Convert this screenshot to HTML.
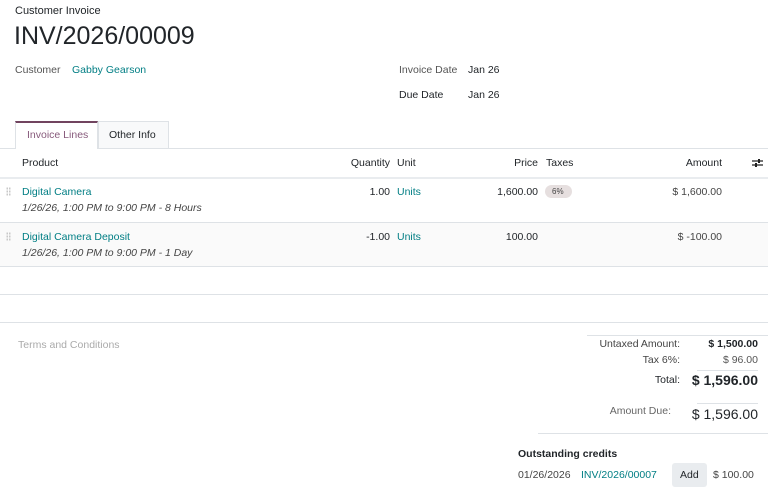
<!DOCTYPE html>
<html><head><style>
*{margin:0;padding:0;box-sizing:border-box}
body{width:768px;height:490px;background:#fff;font-family:"Liberation Sans",sans-serif;font-size:10.5px;color:#212529;position:relative;overflow:hidden}
.a{position:absolute;white-space:nowrap;line-height:1}
.r{text-align:right}
.l{color:#017e84}
.g{color:#555}
.hl{position:absolute;height:1px;background:#dee2e6}
.dots{position:absolute;width:5px;height:9px;background-image:radial-gradient(#c8c8c8 45%,transparent 50%);background-size:2.5px 3px}
</style></head><body>
<div class="a" style="left:15px;top:6px;font-size:11px">Customer Invoice</div>
<div class="a" style="left:14px;top:24px;font-size:25px">INV/2026/00009</div>
<div class="a g" style="left:15px;top:65px">Customer</div>
<div class="a l" style="left:72px;top:65px">Gabby Gearson</div>
<div class="a g" style="left:399px;top:65px">Invoice Date</div>
<div class="a" style="left:468px;top:65px">Jan 26</div>
<div class="a" style="left:399px;top:90px">Due Date</div>
<div class="a" style="left:468px;top:90px">Jan 26</div>

<div style="position:absolute;left:15px;top:121px;width:83px;height:28px;border-top:2px solid #71445f;border-left:1px solid #dee2e6;border-right:1px solid #dee2e6;background:#fff;z-index:2"></div>
<div class="a" style="left:27px;top:130px;color:#875a7b;z-index:3">Invoice Lines</div>
<div style="position:absolute;left:98px;top:121px;width:71px;height:27px;border:1px solid #dee2e6;border-bottom:none;background:#f8f9fa"></div>
<div class="a" style="left:109px;top:130px">Other Info</div>
<div class="hl" style="left:0;top:148px;width:768px"></div>

<div class="a" style="left:22px;top:158px">Product</div>
<div class="a r" style="left:330px;width:60px;top:158px">Quantity</div>
<div class="a" style="left:397px;top:158px">Unit</div>
<div class="a r" style="left:480px;width:58px;top:158px">Price</div>
<div class="a" style="left:546px;top:158px">Taxes</div>
<div class="a r" style="left:640px;width:82px;top:158px">Amount</div>
<svg style="position:absolute;left:752px;top:158px" width="11" height="10" viewBox="0 0 11 10"><path d="M0 3h11M0 7h11" stroke="#222" stroke-width="1.3"/><rect x="6" y="1" width="2" height="4" fill="#222"/><rect x="3" y="5" width="2" height="4" fill="#222"/></svg>
<div class="hl" style="left:0;top:177px;width:768px;height:2px;background:#e9ecef"></div>

<div class="dots" style="left:6px;top:187px"></div>
<div class="a l" style="left:22px;top:187px">Digital Camera</div>
<div class="a" style="left:22px;top:203px;font-style:italic;color:#444">1/26/26, 1:00 PM to 9:00 PM - 8 Hours</div>
<div class="a r" style="left:330px;width:60px;top:187px">1.00</div>
<div class="a l" style="left:397px;top:187px">Units</div>
<div class="a r" style="left:470px;width:68px;top:187px">1,600.00</div>
<div style="position:absolute;left:545px;top:185px;width:27px;height:13px;border-radius:7px;background:#e6dfdf"></div>
<div class="a" style="left:552px;top:188px;font-size:8px;color:#444">6%</div>
<div class="a r" style="left:640px;width:82px;top:187px;color:#444">$ 1,600.00</div>
<div class="hl" style="left:0;top:222px;width:768px"></div>

<div style="position:absolute;left:0;top:223px;width:768px;height:43px;background:#fafafa"></div>
<div class="dots" style="left:6px;top:232px"></div>
<div class="a l" style="left:22px;top:232px">Digital Camera Deposit</div>
<div class="a" style="left:22px;top:248px;font-style:italic;color:#444">1/26/26, 1:00 PM to 9:00 PM - 1 Day</div>
<div class="a r" style="left:330px;width:60px;top:232px">-1.00</div>
<div class="a l" style="left:397px;top:232px">Units</div>
<div class="a r" style="left:470px;width:68px;top:232px">100.00</div>
<div class="a r" style="left:640px;width:82px;top:232px;color:#444">$ -100.00</div>
<div class="hl" style="left:0;top:266px;width:768px"></div>
<div class="hl" style="left:0;top:294px;width:768px"></div>
<div class="hl" style="left:0;top:322px;width:768px"></div>

<div class="a" style="left:18px;top:340px;color:#aaa">Terms and Conditions</div>
<div class="hl" style="left:587px;top:335px;width:181px"></div>
<div class="a r" style="left:560px;width:120px;top:339px;color:#444">Untaxed Amount:</div>
<div class="a r" style="left:680px;width:78px;top:339px;font-weight:bold">$ 1,500.00</div>
<div class="a r" style="left:560px;width:120px;top:355px;color:#444">Tax 6%:</div>
<div class="a r" style="left:680px;width:78px;top:355px;color:#555">$ 96.00</div>
<div class="hl" style="left:697px;top:370px;width:61px"></div>
<div class="a r" style="left:560px;width:120px;top:375px">Total:</div>
<div class="a r" style="left:680px;width:78px;top:373px;font-weight:bold;font-size:14px">$ 1,596.00</div>
<div class="hl" style="left:697px;top:403px;width:61px"></div>
<div class="a r" style="left:560px;width:111px;top:406px;color:#666">Amount Due:</div>
<div class="a r" style="left:680px;width:78px;top:407px;font-size:14px">$ 1,596.00</div>
<div class="hl" style="left:538px;top:433px;width:230px"></div>
<div class="a" style="left:518px;top:449px;font-weight:bold">Outstanding credits</div>
<div class="a" style="left:518px;top:470px;color:#444">01/26/2026</div>
<div class="a l" style="left:581px;top:470px">INV/2026/00007</div>
<div style="position:absolute;left:672px;top:463px;width:35px;height:24px;background:#e9ecef;border-radius:3px"></div>
<div class="a" style="left:680px;top:470px">Add</div>
<div class="a" style="left:713px;top:470px;color:#444">$ 100.00</div>
</body></html>
